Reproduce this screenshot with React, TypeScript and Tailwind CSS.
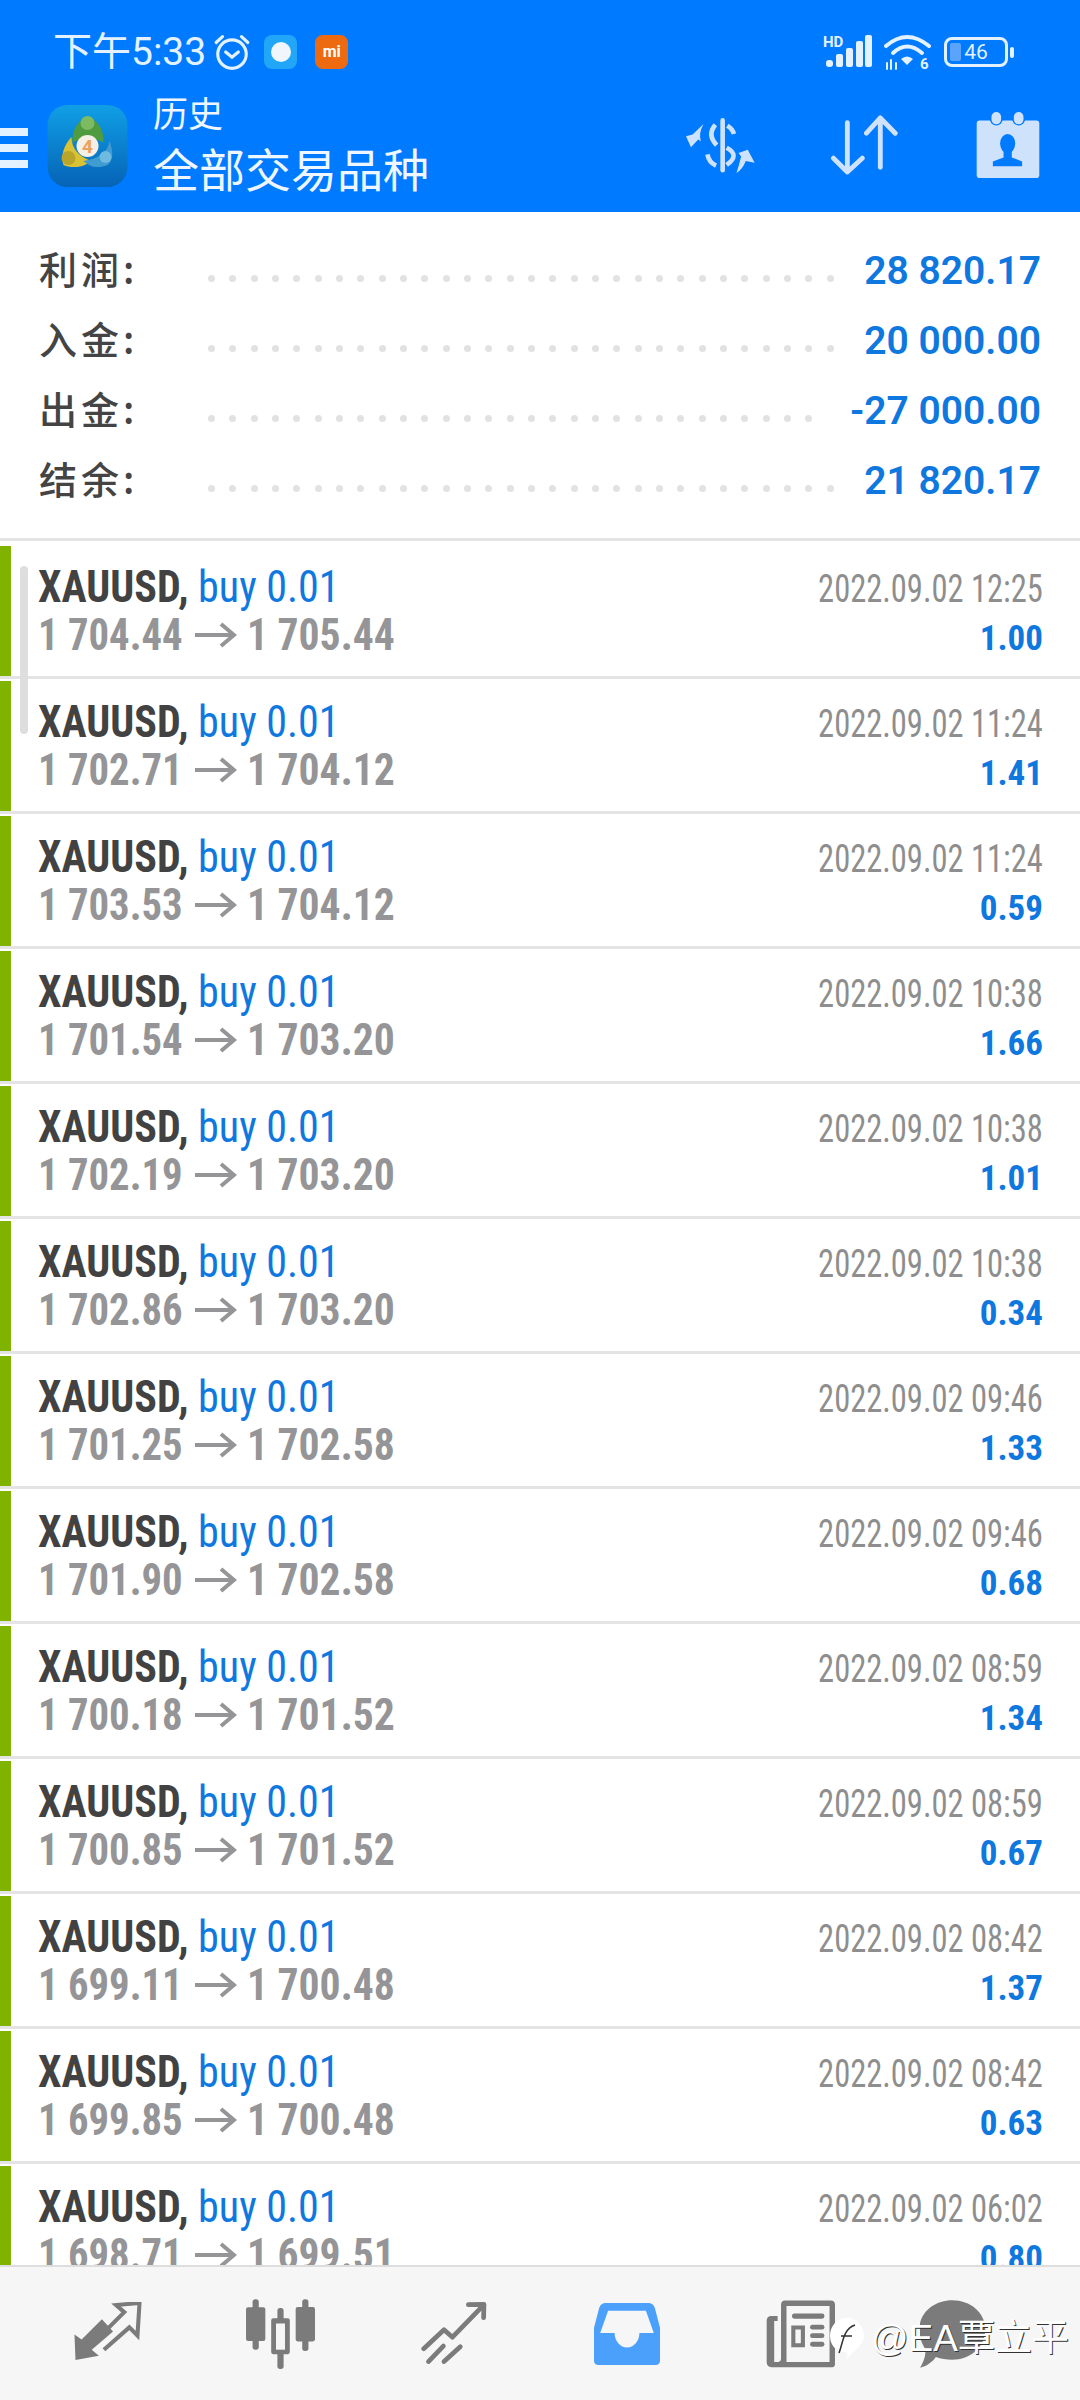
import React from "react";

const rows: [string, string, string, string][] = [
  ["1 704.44", "1 705.44", "2022.09.02 12:25", "1.00"],
  ["1 702.71", "1 704.12", "2022.09.02 11:24", "1.41"],
  ["1 703.53", "1 704.12", "2022.09.02 11:24", "0.59"],
  ["1 701.54", "1 703.20", "2022.09.02 10:38", "1.66"],
  ["1 702.19", "1 703.20", "2022.09.02 10:38", "1.01"],
  ["1 702.86", "1 703.20", "2022.09.02 10:38", "0.34"],
  ["1 701.25", "1 702.58", "2022.09.02 09:46", "1.33"],
  ["1 701.90", "1 702.58", "2022.09.02 09:46", "0.68"],
  ["1 700.18", "1 701.52", "2022.09.02 08:59", "1.34"],
  ["1 700.85", "1 701.52", "2022.09.02 08:59", "0.67"],
  ["1 699.11", "1 700.48", "2022.09.02 08:42", "1.37"],
  ["1 699.85", "1 700.48", "2022.09.02 08:42", "0.63"],
  ["1 698.71", "1 699.51", "2022.09.02 06:02", "0.80"],
];

const summary: [string, string, number][] = [
  ["利润:", "28 820.17", 30],
  ["入金:", "20 000.00", 30],
  ["出金:", "-27 000.00", 29],
  ["结余:", "21 820.17", 30],
];

function Row({ r }: { r: [string, string, string, string] }) {
  return (
    <div className="h-[135px] shrink-0 flex border-b-[3px] border-[#e4e4e4]">
      <div className="w-[11px] mt-[2px] bg-[#7fb300] shrink-0" />
      <div className="flex-1 flex justify-between pl-[27px] pr-[37px] pt-[19px] [font-family:Roboto,sans-serif] [font-stretch:75%]">
        <div className="flex flex-col">
          <div className="h-[48px] flex items-baseline text-[44px] leading-[48px] whitespace-pre origin-left scale-x-[0.955]">
            <span className="font-bold text-[#424242]">XAUUSD, </span>
            <span className="text-[#0f78df]">buy 0.01</span>
          </div>
          <div className="h-[48px] flex items-center text-[44px] leading-[48px] font-bold text-[#959598] whitespace-pre">
            <span className="inline-block w-[148px] origin-left scale-x-[0.925]">{r[0]}</span>
            <svg width="42" height="28" viewBox="0 0 42 28" className="mr-[10px] ml-[9px]" fill="none" stroke="#959598" strokeWidth="4">
              <path d="M0 14H39M26 3L39 14L26 25" />
            </svg>
            <span className="inline-block origin-left scale-x-[0.945]">{r[1]}</span>
          </div>
        </div>
        <div className="flex flex-col items-end">
          <div className="h-[52px] flex items-center text-[38px] leading-[48px] text-[#8e8e8e] origin-right scale-x-[0.855]">{r[2]}</div>
          <div className="h-[48px] flex items-center text-[35px] leading-[46px] font-bold text-[#0f78df]">{r[3]}</div>
        </div>
      </div>
    </div>
  );
}

function MtLogo() {
  return (
    <svg width="81" height="82" viewBox="0 0 80 82" className="shrink-0">
      <defs>
        <linearGradient id="mtbg" x1="0" y1="0" x2="0" y2="1">
          <stop offset="0" stopColor="#109fe6" />
          <stop offset="1" stopColor="#0663b6" />
        </linearGradient>
      </defs>
      <rect width="80" height="82" rx="20" fill="url(#mtbg)" />
      <path d="M40 12C49 14 57 24 56 38C50 32 32 32 25 38C24 26 30 15 40 12Z" fill="#4f9b3f" />
      <circle cx="40" cy="18" r="7" fill="#7dbb62" />
      <path d="M24 32C16 40 13 52 16 60C24 64 38 62 44 56C32 52 24 44 24 32Z" fill="#d9c233" />
      <circle cx="21" cy="53" r="7" fill="#b9a52a" />
      <path d="M62 36C66 46 66 56 60 60C50 64 42 62 36 56C50 54 60 48 62 36Z" fill="#3f9bd0" />
      <circle cx="58" cy="52" r="6" fill="#6fbbe0" />
      <circle cx="40" cy="41" r="11" fill="#f5efe6" />
      <text x="40" y="48" textAnchor="middle" fontSize="19" fontWeight="700" fill="#eaa25c" fontFamily="Roboto, sans-serif">4</text>
    </svg>
  );
}

function AlarmIcon() {
  return (
    <svg width="38" height="38" viewBox="0 0 36 36" fill="none" stroke="#e4f1ff" strokeWidth="3" strokeLinecap="round" className="ml-[7px]">
      <circle cx="18" cy="20" r="13.5" />
      <path d="M12 18L18 23L24 18" />
      <path d="M3 9L9 3.5M33 9L27 3.5" />
    </svg>
  );
}

function SwapIcon() {
  return (
    <svg width="70" height="55" viewBox="425 350 212 166" fill="none" stroke="#cfe2fb" strokeWidth="14" strokeLinecap="round">
      <path d="M536 357V508" />
      <path d="M550 373Q566 382 570 398" strokeLinecap="butt" />
      <path d="M514 370Q488 400 518 432" strokeLinecap="butt" />
      <path d="M490 460Q494 484 516 494" strokeLinecap="butt" />
      <path d="M548 440Q590 462 548 492" strokeLinecap="butt" />
      <path d="M425 405L445 400L478 368Q462 398 470 420L462 415L440 438Z" fill="#cfe2fb" stroke="none" />
      <path d="M633 485L612 446L584 456L592 466Q586 490 578 516Q596 506 606 480Z" fill="#cfe2fb" stroke="none" />
    </svg>
  );
}

function SortIcon() {
  return (
    <svg width="68" height="60" viewBox="845 350 196 172" fill="none" stroke="#cfe2fb" strokeWidth="14" strokeLinecap="round" strokeLinejoin="round">
      <path d="M895 372V514M855 474L895 514L938 474" />
      <path d="M990 500V358M950 402L990 358L1033 402" />
    </svg>
  );
}

function CalIcon() {
  return (
    <svg width="64" height="68" viewBox="1266 338 186 196">
      <rect x="1268" y="365" width="182" height="167" rx="9" fill="#cfe2fb" />
      <circle cx="1325" cy="360" r="19" fill="#007aff" />
      <circle cx="1390" cy="360" r="19" fill="#007aff" />
      <rect x="1311" y="340" width="28" height="36" rx="14" fill="#cfe2fb" />
      <rect x="1376" y="340" width="28" height="36" rx="14" fill="#cfe2fb" />
      <ellipse cx="1358" cy="432" rx="22" ry="28" fill="#007aff" />
      <path d="M1346 452H1370V472L1400 484V498H1315V484L1346 472Z" fill="#007aff" />
    </svg>
  );
}

function StatusRight() {
  return (
    <div className="flex items-center">
      <svg width="50" height="34" viewBox="0 0 50 34">
        <text x="0" y="12" fontSize="15" fontWeight="700" fill="#e4f1ff" fontFamily="Roboto, sans-serif">HD</text>
        <rect x="3" y="25" width="7" height="7" rx="3" fill="#e4f1ff" />
        <rect x="13" y="19" width="7" height="13" rx="2" fill="#e4f1ff" />
        <rect x="23" y="13" width="7" height="19" rx="2" fill="#e4f1ff" />
        <rect x="33" y="6" width="7" height="26" rx="2" fill="#e4f1ff" />
        <rect x="42" y="0" width="7" height="32" rx="2" fill="#e4f1ff" />
      </svg>
      <svg width="48" height="36" viewBox="0 0 48 36" fill="none" stroke="#e4f1ff" strokeWidth="4" strokeLinecap="round" className="ml-[11px]">
        <path d="M2 12Q23 -6 45 12" />
        <path d="M9 19Q23 6 38 19" />
        <path d="M23 31L17 25Q23 20 29 25Z" fill="#e4f1ff" stroke="none" />
        <path d="M3 29V35M7 26V35M12 29V35" strokeWidth="2" />
        <text x="36" y="35" fontSize="15" fontWeight="700" fill="#e4f1ff" stroke="none" fontFamily="Roboto, sans-serif">6</text>
      </svg>
      <div className="ml-[12px] w-[64px] h-[30px] border-[3px] border-[#e4f1ff] rounded-[8px] flex items-center relative overflow-hidden">
        <div className="w-[11px] ml-[3px] h-[18px] bg-[#5aa5fb] rounded-[2px] shrink-0" />
        <span className="absolute inset-0 text-center text-[21px] leading-[24px] text-[#e4f1ff] [font-family:Roboto,sans-serif]">46</span>
      </div>
      <div className="ml-[2px] w-[4px] h-[11px] rounded-[2px] bg-[#e4f1ff]" />
    </div>
  );
}

function TradeIcon() {
  return (
    <svg width="68" height="63" viewBox="0 0 66 62" className="shrink-0">
      <polygon points="0,32 7,37 27,17 38,29 17,47 24,53 1,57" fill="#7b7b7b" />
      <path d="M33 26L49 10L41 3L64 1L62 33L54 25L29 47" fill="none" stroke="#7b7b7b" strokeWidth="4" />
    </svg>
  );
}

function CandleIcon() {
  return (
    <svg width="69" height="70" viewBox="716 474 200 203" className="shrink-0">
      <rect x="735" y="475" width="18" height="146" rx="8" fill="#7b7b7b" />
      <rect x="716" y="498" width="56" height="98" rx="6" fill="#7b7b7b" />
      <rect x="807" y="500" width="18" height="177" rx="8" fill="#7b7b7b" />
      <rect x="789" y="530" width="54" height="104" rx="6" fill="#7b7b7b" />
      <rect x="803" y="545" width="26" height="76" fill="#f6f6f6" />
      <rect x="879" y="475" width="18" height="150" rx="8" fill="#7b7b7b" />
      <rect x="860" y="497" width="56" height="100" rx="6" fill="#7b7b7b" />
    </svg>
  );
}

function LineIcon() {
  return (
    <svg width="67" height="63" viewBox="1222 480 198 186" fill="none" stroke="#7b7b7b" strokeWidth="14" strokeLinecap="round" strokeLinejoin="round" className="shrink-0">
      <path d="M1230 618L1290 562L1315 584L1404 492" />
      <path d="M1362 488L1408 487L1407 526" />
      <path d="M1244 656L1288 610" />
      <path d="M1290 656L1338 612" />
    </svg>
  );
}

function InboxIcon() {
  return (
    <svg width="66" height="62" viewBox="158 483 192 180" className="shrink-0">
      <path d="M192 483H316Q330 483 335 497L350 555V650Q350 663 337 663H171Q158 663 158 650V555L173 497Q178 483 192 483Z" fill="#4aa0fb" />
      <path d="M199 505H309L332 570H290A36 42 0 0 1 218 570H176Z" fill="#f6f6f6" />
    </svg>
  );
}

function NewsIcon() {
  return (
    <svg width="69" height="68" viewBox="656 474 202 198" className="shrink-0">
      <path d="M690 520H672Q658 520 658 534V656Q658 670 672 670H850Q858 670 858 660V488Q858 475 845 475H712Q700 475 700 488V645Q700 655 690 655H680V535H690Z" fill="#7b7b7b" />
      <rect x="716" y="491" width="126" height="164" fill="#f6f6f6" />
      <rect x="732" y="513" width="95" height="15" rx="7" fill="#7b7b7b" />
      <path d="M730 548H770V612H730ZM742 560V600H758V560Z" fill="#7b7b7b" fillRule="evenodd" />
      <rect x="785" y="546" width="42" height="14" rx="7" fill="#7b7b7b" />
      <rect x="785" y="571" width="42" height="14" rx="7" fill="#7b7b7b" />
      <rect x="785" y="596" width="42" height="14" rx="7" fill="#7b7b7b" />
    </svg>
  );
}

function ChatIcon() {
  return (
    <svg width="66" height="68" viewBox="1104 474 192 198" className="shrink-0">
      <path d="M1198 475C1250 475 1294 510 1294 560C1294 612 1250 648 1198 648C1180 648 1165 645 1150 640C1140 655 1122 668 1104 671C1114 655 1120 640 1120 618C1108 600 1102 582 1102 560C1102 510 1146 475 1198 475Z" fill="#7b7b7b" />
    </svg>
  );
}

export default function App() {
  return (
    <div className="w-[1080px] h-[2400px] flex flex-col overflow-hidden bg-white [font-family:'Noto_Sans_CJK_SC',sans-serif]">
      <header className="h-[212px] shrink-0 bg-[#007aff] flex flex-col">
        <div className="h-[70px] mt-[17px] flex justify-between items-center pl-[53px] pr-[66px]">
          <div className="flex items-center">
            <span className="text-[39px] leading-[44px] text-[#e4f1ff] [font-family:Roboto,'Noto_Sans_CJK_SC',sans-serif]">下午5:33</span>
            <AlarmIcon />
            <div className="ml-[13px] w-[33px] h-[34px] rounded-[8px] bg-[#22a6f8] flex items-center justify-center">
              <div className="w-[20px] h-[20px] rounded-full bg-[#f0f6fb]" />
            </div>
            <div className="ml-[18px] w-[33px] h-[34px] rounded-[8px] bg-[#ee6a10] flex items-center justify-center text-[16px] leading-none font-bold text-white [font-family:Roboto,sans-serif]">
              mi
            </div>
          </div>
          <StatusRight />
        </div>
        <div className="flex-1 flex items-center">
          <div className="w-[28px] flex flex-col gap-[8px] shrink-0 mb-[4px]">
            <div className="h-[8px] bg-[#e4f1ff]" />
            <div className="h-[8px] bg-[#e4f1ff]" />
            <div className="h-[8px] bg-[#e4f1ff]" />
          </div>
          <div className="ml-[19px] mb-[7px]">
            <MtLogo />
          </div>
          <div className="ml-[25px] mb-[5px] flex flex-col text-[#eef6ff]">
            <span className="text-[35px] leading-[40px]">历史</span>
            <span className="text-[46px] leading-[70px]">全部交易品种</span>
          </div>
          <div className="ml-auto flex items-center mr-[40px] mb-[9px]">
            <SwapIcon />
            <div className="ml-[74px]"><SortIcon /></div>
            <div className="ml-[78px]"><CalIcon /></div>
          </div>
        </div>
      </header>

      <section className="h-[329px] shrink-0 border-b-[3px] border-[#e4e4e4] pt-[24px] pl-[39px] pr-[39px]">
        {summary.map(([label, value, dots]) => (
          <div key={label} className="h-[70px] flex items-center relative">
            <span className="w-[169px] shrink-0 -mt-[6px] text-[38px] leading-[44px] tracking-[4px] font-medium text-[#444444]">{label}</span>
            <div className="flex shrink-0 gap-[14.33px] mt-[15px]">
              {Array.from({ length: dots }).map((_, i) => (
                <div key={i} className="w-[7px] h-[7px] shrink-0 rounded-full bg-[#e2e2e2]" />
              ))}
            </div>
            <span className="ml-auto text-[39px] leading-[44px] font-semibold text-[#0f78df] [font-stretch:98%] [font-family:Roboto,sans-serif]">{value}</span>
          </div>
        ))}
      </section>

      <main className="flex-1 min-h-0 overflow-hidden relative pt-[3px]">
        {rows.map((r) => (
          <Row key={r[0] + r[2]} r={r} />
        ))}
        <div className="absolute left-[20px] top-[25px] w-[8px] h-[168px] rounded-[4px] bg-[#dedede]" />
      </main>

      <nav className="h-[135px] shrink-0 bg-[#f6f6f6] border-t-[2px] border-[#dddddd] flex items-center relative">
        <div className="ml-[74px]"><TradeIcon /></div>
        <div className="ml-[104px]"><CandleIcon /></div>
        <div className="ml-[106px]"><LineIcon /></div>
        <div className="ml-[106px]"><InboxIcon /></div>
        <div className="ml-[106px]"><NewsIcon /></div>
        <div className="ml-[85px]"><ChatIcon /></div>
        <div className="absolute left-[829px] top-[50px] flex items-center">
          <svg width="36" height="44" viewBox="0 0 36 44">
            <path d="M18 1C28 1 35 9 35 19C35 29 25 33 17 43C19 38 19 36 17 35C7 35 1 28 1 19C1 9 8 1 18 1Z" fill="#ffffff" />
            <path d="M10 36C14 26 14 12 26 8M12 19H23" fill="none" stroke="#333333" strokeWidth="1.5" />
          </svg>
          <span className="ml-[6px] text-[37px] leading-[44px] whitespace-nowrap text-white [text-shadow:1px_1px_0_#333333] [font-family:'Liberation_Sans','Noto_Sans_CJK_SC',sans-serif]">@EA覃立平</span>
        </div>
      </nav>
    </div>
  );
}
